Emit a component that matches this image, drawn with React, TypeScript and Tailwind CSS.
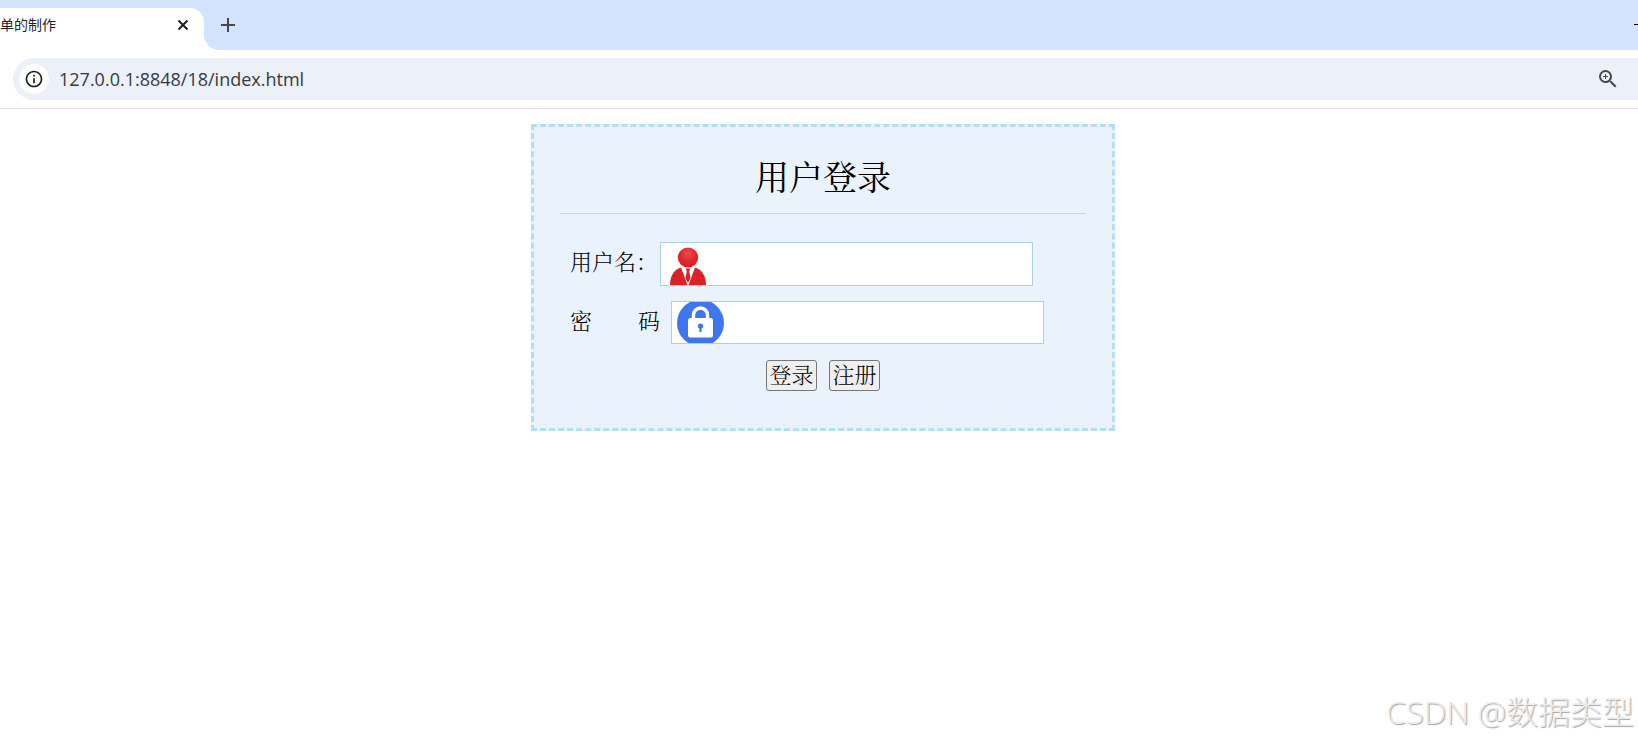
import type { ReactNode } from 'react';
import { MdInfoOutline, MdZoomIn } from 'react-icons/md';

const UserIcon = () => (
  <svg viewBox="0 0 38 42" className="h-[42px] w-[38px] shrink-0" aria-hidden="true">
    <defs>
      <radialGradient id="head" cx="0.5" cy="0.3" r="0.7">
        <stop offset="0" stopColor="#ea4a4f" />
        <stop offset="0.6" stopColor="#e0262b" />
        <stop offset="1" stopColor="#d91c22" />
      </radialGradient>
    </defs>
    <ellipse cx="19" cy="14.500" rx="10.200" ry="10" fill="url(#head)" />
    <path d="M1 42C1 33 5 26.500 12 24.500L18.500 42Z" fill="#dc2127" />
    <path d="M37 42C37 33 33 26.500 26 24.500L19.500 42Z" fill="#dc2127" />
    <path d="M16.800 25.500h4.400l-1 3 1.300 6.500-2.500 5-2.500-5 1.300-6.500z" fill="#dc2127" />
  </svg>
);

const LockIcon = () => (
  <svg viewBox="0 0 47 42" className="h-[42px] w-[47px] shrink-0" aria-hidden="true">
    <circle cx="23.500" cy="21" r="23.500" fill="#3f76ee" />
    <path d="M16.500 18v-5a7 7 0 0 1 14 0v5" fill="none" stroke="#fff" strokeWidth="3.400" />
    <rect x="11" y="16" width="25" height="19.500" rx="2.500" fill="#fff" />
    <circle cx="23.500" cy="24" r="2.600" fill="#3f76ee" />
    <path d="M22.400 24h2.200v6h-2.200z" fill="#3f76ee" />
  </svg>
);

const BrowserBar = () => (
  <header className="border-b border-[#dfdfdf] font-['Open_Sans','Noto_Sans_CJK_SC',sans-serif]">
    <div className="flex h-[50px] items-end bg-[#d3e3fd]">
      <div className="flex h-[42px] w-[204px] items-center justify-between rounded-tr-[14px] bg-white pr-[15px] pb-2">
        <span className="text-[14px] leading-5 text-[#1f1f1f]">单的制作</span>
        <button type="button" aria-label="关闭标签页">
          <svg viewBox="0 0 12 12" className="h-3 w-3" stroke="#1f1f1f" strokeWidth="2">
            <path d="M1.500 1.500l9 9M10.500 1.500l-9 9" />
          </svg>
        </button>
      </div>
      <svg viewBox="0 0 15 15" className="h-[15px] w-[15px]" aria-hidden="true">
        <path d="M0 0A15 15 0 0 0 15 15H0Z" fill="#fff" />
      </svg>
      <button type="button" aria-label="新建标签页" className="mb-[18px] ml-[2px]">
        <svg viewBox="0 0 14 14" className="h-[14px] w-[14px]" stroke="#474747" strokeWidth="2">
          <path d="M7 0v14M0 7h14" />
        </svg>
      </button>
      <button type="button" aria-label="最小化" className="mb-[25px] ml-auto h-px w-1 bg-black" />
    </div>
    <div className="py-2 pl-[13px]">
      <div className="flex h-[42px] items-center rounded-l-full bg-[#ebf0f9] pr-[18px] pl-[6px]">
        <button
          type="button"
          aria-label="查看网站信息"
          className="flex h-[30px] w-[30px] items-center justify-center rounded-full bg-white text-[#1f1f1f]"
        >
          <MdInfoOutline size={20} />
        </button>
        <input
          type="text"
          aria-label="地址"
          defaultValue="127.0.0.1:8848/18/index.html"
          className="ml-[10px] min-w-0 flex-1 bg-transparent text-[18px] text-[#3a3a3a] outline-none"
        />
        <button type="button" aria-label="缩放" className="text-[#474747]">
          <MdZoomIn size={24} />
        </button>
      </div>
    </div>
  </header>
);

const FieldBox = ({ children }: { children: ReactNode }) => (
  <div className="flex w-[373px] overflow-hidden border border-[#a9d0e6] bg-white">{children}</div>
);

const SubmitButton = ({ children }: { children: ReactNode }) => (
  <button
    type="button"
    className="h-[31px] w-[51px] rounded-[3px] border border-[#767676] bg-[#efefef] text-[22px] leading-7"
  >
    {children}
  </button>
);

export default function App() {
  return (
    <div className="relative min-h-screen bg-white">
      <BrowserBar />
      <main className="pt-[15px] pl-2 font-['Liberation_Serif','Noto_Serif_CJK_SC','Noto_Sans_CJK_SC',serif] font-light text-black">
        <form className="mx-auto w-[584px] border-3 border-dashed border-[#b5def4] bg-[#eaf3fb] px-[26px] pt-[27px] pb-[37px]">
          <h1 className="border-b border-[#b5def4] pb-[9px] text-center text-[34px] leading-[50px] font-normal">
            用户登录
          </h1>
          <div className="mt-7 flex flex-col gap-[15px] pl-[10px] text-[22px]">
            <div className="flex h-11">
              <label htmlFor="username" className="w-[90px] leading-[42px] whitespace-pre">用户名：</label>
              <FieldBox>
                <span className="pl-2"><UserIcon /></span>
                <input id="username" type="text" className="min-w-0 flex-1 px-2 outline-none" />
              </FieldBox>
            </div>
            <div className="flex h-[43px]">
              <label htmlFor="password" className="mr-[11px] flex w-[90px] justify-between leading-[42px]">
                <span>密</span>
                <span>码</span>
              </label>
              <FieldBox>
                <span className="pl-[5px]"><LockIcon /></span>
                <input id="password" type="password" className="min-w-0 flex-1 px-2 outline-none" />
              </FieldBox>
            </div>
          </div>
          <div className="mt-4 flex justify-center gap-3">
            <SubmitButton>登录</SubmitButton>
            <SubmitButton>注册</SubmitButton>
          </div>
        </form>
      </main>
      <p className="absolute right-1 bottom-[5px] font-['Open_Sans','Noto_Sans_CJK_SC',sans-serif] text-[32px] leading-[48px] font-light text-[#ebebeb] [text-shadow:1px_1px_1px_#a3a3a3]">
        CSDN @数据类型
      </p>
    </div>
  );
}
